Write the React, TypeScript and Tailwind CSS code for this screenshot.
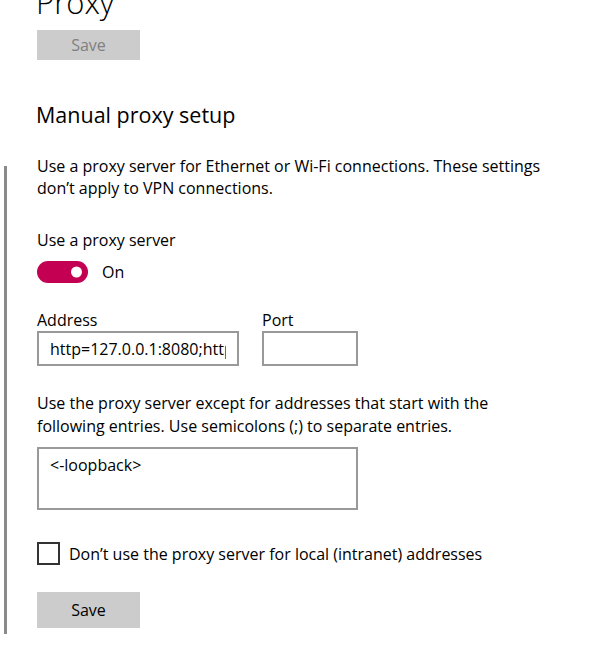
import { useState } from "react"

const font = { fontFamily: '"Open Sans", "Noto Sans", sans-serif' }

const Toggle = ({ on, onClick }: { on: boolean; onClick: () => void }) => (
  <button
    onClick={onClick}
    className={`relative h-[22px] w-[51px] rounded-full ${on ? "bg-[#c30052]" : "border-2 border-black bg-white"}`}
  >
    <span
      className={`absolute top-1/2 h-[11px] w-[11px] -translate-y-1/2 rounded-full ${on ? "right-[6px] bg-white" : "left-[6px] bg-black"}`}
    />
  </button>
)

export default function App() {
  const [on, setOn] = useState(true)
  const [local, setLocal] = useState(false)

  return (
    <div className="h-[653px] w-[616px] overflow-hidden bg-white text-black" style={font}>
      {/* top part, above the side rule */}
      <div className="pl-[36px]">
        <h1 className="-mt-[19px] text-[31px] font-light leading-[42px]">Proxy</h1>
        <button className="ml-[1px] mt-[7px] h-[30px] w-[103px] bg-[#cccccc] text-[16px] text-[#808080]">
          Save
        </button>
        <h2 className="mt-[40px] text-[21.5px] leading-[30px]">Manual proxy setup</h2>
      </div>

      <div className="ml-[4px] mt-[36px] flex h-[468px] flex-col items-start border-l-[3px] border-[#8a8a8a] pl-[30px] text-[16px] leading-[22px]">
        <p className="-mt-[11px] w-[505px]">
          Use a proxy server for Ethernet or Wi-Fi connections. These settings don’t apply to VPN
          connections.
        </p>

        <p className="mt-[30px]">Use a proxy server</p>
        <div className="mt-[10px] flex items-center gap-[14px]">
          <Toggle on={on} onClick={() => setOn(!on)} />
          <span>{on ? "On" : "Off"}</span>
        </div>

        <div className="mt-[26px] flex gap-[23px]">
          <label className="flex flex-col">
            <span>Address</span>
            <input
              defaultValue="http=127.0.0.1:8080;https=127.0.0.1:8080"
              className="h-[35px] w-[202px] border-2 border-[#999999] px-[11px] text-[16px] outline-none"
            />
          </label>
          <label className="flex flex-col">
            <span>Port</span>
            <input className="h-[35px] w-[96px] border-2 border-[#999999] px-[11px] text-[16px] outline-none" />
          </label>
        </div>

        <p className="mt-[26px] w-[505px] leading-[23px]">
          Use the proxy server except for addresses that start with the following entries. Use
          semicolons (;) to separate entries.
        </p>
        <textarea
          defaultValue="<-loopback>"
          className="mt-[9px] block h-[63px] w-[321px] resize-none border-2 border-[#999999] px-[11px] py-[5px] text-[16px] leading-[22px] outline-none"
        />

        <label className="mt-[32px] flex cursor-pointer items-center gap-[9px]">
          <span
            onClick={() => setLocal(!local)}
            className="flex h-[23px] w-[23px] items-center justify-center border-[2.5px] border-[#333333] bg-white"
          >
            {local && (
              <svg viewBox="0 0 16 16" className="h-[14px] w-[14px]">
                <path d="M2 8.5l4 4 8-9" fill="none" stroke="#000" strokeWidth="2" />
              </svg>
            )}
          </span>
          <span>Don’t use the proxy server for local (intranet) addresses</span>
        </label>

        <button className="mt-[27px] h-[36px] w-[103px] bg-[#cccccc] text-[16px]">Save</button>
      </div>
    </div>
  )
}
